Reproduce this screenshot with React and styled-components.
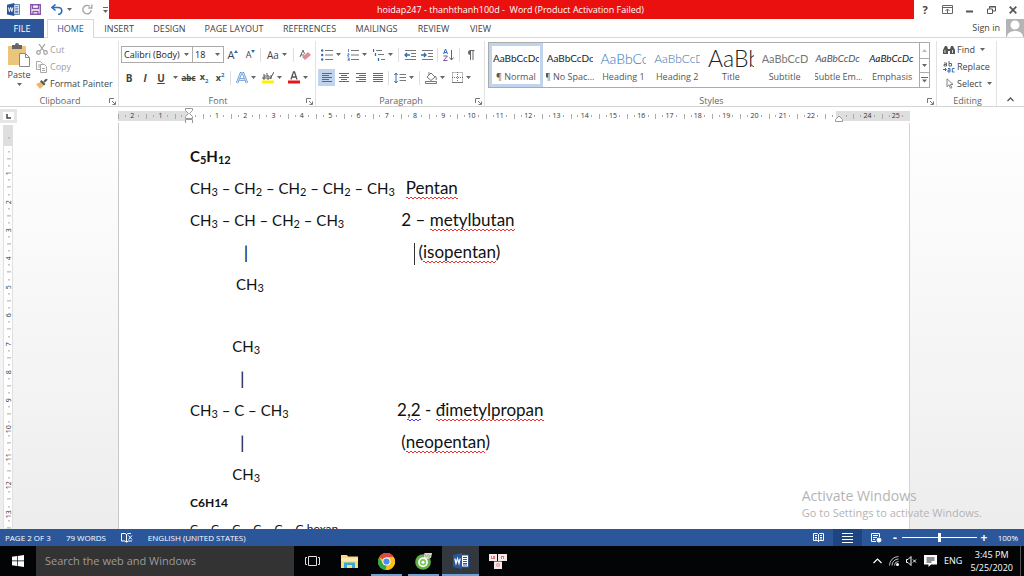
import React from "react";
import styled, { createGlobalStyle, css } from "styled-components";

const UI = '"Open Sans", "Noto Sans", sans-serif';
const DOC = 'Lato, "Open Sans", sans-serif';
const BLUE = "#2b579a";

const Global = createGlobalStyle`
  *, *::before, *::after { box-sizing: border-box; }
  body { margin: 0; font: 9px/12px ${UI}; color: #444; background: #fff; }
  button, input, select { font: inherit; color: inherit; margin: 0; padding: 0; border: 0; background: none; border-radius: 0; }
  svg { display: block; flex: none; }
  h1, h2, p { margin: 0; font-weight: 400; }
`;

const Shell = styled.div`
  height: 100vh;
  display: flex;
  flex-direction: column;
  overflow: hidden;
`;

/* Title bar */
const TitleBar = styled.header`
  display: flex;
  flex: none;
  height: 19px;
`;
const QuickAccess = styled.div`
  display: flex;
  align-items: center;
  width: 109px;
  padding-left: 7px;
  gap: 10px;
`;
const IconButton = styled.button`
  display: flex;
  align-items: center;
  justify-content: center;
  gap: 4px;
`;
const TitleText = styled.h1`
  flex: 1;
  background: #ea1010;
  color: #fff;
  font-size: 9px;
  line-height: 19px;
  text-align: center;
  white-space: pre;
  padding-right: 2px;
`;
const WindowControls = styled.div`
  display: grid;
  grid-template-columns: repeat(5, 22px);
  font-weight: 700;
  font-size: 11px;
`;

/* Tabs */
const TabRow = styled.nav`
  display: flex;
  flex: none;
  height: 19px;
  border-bottom: 1px solid #d8d8d8;
`;
const Tab = styled.button`
  width: ${(p) => p.$w}px;
  height: 19px;
  white-space: nowrap;
  text-align: center;
  ${(p) => p.$kind === "file" && css`
    background: ${BLUE};
    color: #fff;
    margin-right: 3px;
  `}
  ${(p) => p.$kind === "active" && css`
    background: #fff;
    color: ${BLUE};
    border: 1px solid #d8d8d8;
    border-bottom: 0;
  `}
`;
const Account = styled.button`
  display: flex;
  align-items: center;
  gap: 6px;
  margin-left: auto;
  height: 18px;
`;

/* Ribbon */
const Ribbon = styled.section`
  display: flex;
  flex: none;
  height: 69px;
  padding: 3px 0 0;
  border-bottom: 1px solid #d4d4d4;
`;
const Group = styled.div`
  display: flex;
  flex-direction: column;
  flex: ${(p) => (p.$w ? `0 0 ${p.$w}px` : "1 1 0")};
  min-width: 0;
  padding-left: 2px;
  border-right: 1px solid #e2e2e2;
`;
const GroupBody = styled.div`
  flex: 1;
  display: flex;
  min-height: 0;
`;
const GroupFooter = styled.div`
  display: grid;
  grid-template-columns: 12px 1fr 12px;
  align-items: center;
  height: 11px;
  text-align: center;
  color: #666;
`;
const GroupName = styled.span`
  grid-column: 2;
`;
const PasteButton = styled.button`
  display: flex;
  flex-direction: column;
  align-items: center;
  width: 34px;
  padding-top: 2px;
  gap: 2px;
`;
const Stack = styled.div`
  display: flex;
  flex-direction: column;
  padding-left: ${(p) => p.$pad || 0}px;
`;
const CommandButton = styled.button`
  display: flex;
  align-items: center;
  gap: 2px;
  height: 17px;
  white-space: nowrap;
  color: ${(p) => (p.$off ? "#a0a0a0" : "#444")};
  svg + svg { margin-left: 3px; }
`;
const CommandCaret = styled.span`
  padding-left: 3px;
`;
const ToolRows = styled.div`
  display: flex;
  flex-direction: column;
  padding-top: 5px;
  gap: 6px;
`;
const ToolRow = styled.div`
  display: flex;
  align-items: center;
  height: 17px;
`;
const Tool = styled.button`
  display: flex;
  align-items: center;
  justify-content: center;
  width: ${(p) => p.$w || 17}px;
  height: 17px;
  gap: ${(p) => (p.$tight ? 0 : 3)}px;
  background: ${(p) => (p.$on ? "#c2d3ee" : "none")};
  font-size: ${(p) => p.$size || 10}px;
  font-weight: ${(p) => (p.$bold ? 700 : 400)};
  font-style: ${(p) => (p.$italic ? "italic" : "normal")};
  text-decoration: ${(p) => p.$line || "none"};
  sub, sup { font-size: 6px; line-height: 1; color: #2f6eb5; }
`;
const Divider = styled.span`
  width: 1px;
  height: 14px;
  margin: 0 2px;
  background: #dedede;
`;
const SelectBox = styled.label`
  display: grid;
  align-items: center;
  width: ${(p) => p.$w}px;
  height: 17px;
  border: 1px solid #ababab;
  margin-right: -1px;
  background: #fff;
  select { grid-area: 1 / 1; appearance: none; padding-left: 2px; width: 100%; color: #222; }
  svg { grid-area: 1 / 1; justify-self: end; margin-right: 3px; pointer-events: none; }
`;

/* Style gallery */
const Gallery = styled.div`
  display: flex;
  height: 46px;
  margin: 1px 6px 0 1px;
  border: 1px solid #ababab;
  flex: 1;
  min-width: 0;
`;
const StyleList = styled.div`
  flex: 1;
  display: grid;
  grid-template-columns: repeat(8, minmax(0, 1fr));
`;
const StyleButton = styled.button`
  display: flex;
  flex-direction: column;
  align-items: center;
  min-width: 0;
  padding: 0 1px;
  overflow: hidden;
  border: 3px solid ${(p) => (p.$on ? "#c2d3ee" : "transparent")};
`;
const Sample = styled.span`
  width: 46px;
  height: 25px;
  line-height: 25px;
  overflow: hidden;
  white-space: nowrap;
  text-align: left;
  font-family: ${DOC};
  font-size: ${(p) => p.$size || 10}px;
  font-style: ${(p) => (p.$italic ? "italic" : "normal")};
  font-weight: ${(p) => p.$weight || 400};
  color: ${(p) => p.$color || "#222"};
`;
const StyleName = styled.span`
  white-space: nowrap;
  color: #555;
`;
const GalleryScroll = styled.div`
  width: 10px;
  display: grid;
  grid-template-rows: repeat(3, 1fr);
  border-left: 1px solid #ababab;
  button + button { border-top: 1px solid #ababab; }
`;
const CollapseButton = styled.button`
  width: 27px;
  display: flex;
  align-items: flex-end;
  justify-content: center;
  padding-bottom: 4px;
`;

/* Rulers */
const RulerRow = styled.div`
  display: flex;
  flex: none;
  height: 16px;
  padding-top: 2px;
`;
const CornerCell = styled.button`
  width: 17px;
  border: 3px solid #e6e6e6;
  margin-right: -3px;
  display: flex;
  align-items: center;
  justify-content: center;
`;
const RulerTrack = styled.div`
  flex: 1;
  display: flex;
  justify-content: center;
  padding: 2px 10px 2px 0;
`;
const Ruler = styled.div`
  width: 792px;
  display: grid;
  grid-template-columns: repeat(28, 28fr);
  background: linear-gradient(90deg, #dedede 72px, #fff 72px, #fff calc(100% - 74px), #dedede calc(100% - 74px));
`;
const ruled = css`
  font-size: 7px;
  line-height: 10px;
  color: #333;
`;
const HMark = styled.span`
  ${ruled}
  display: flex;
  align-items: center;
  justify-content: center;
  height: 10px;
  background:
    linear-gradient(#aaa, #aaa) 0 50% / 1px 5px no-repeat,
    linear-gradient(#aaa, #aaa) 25% 50% / 1px 2px no-repeat,
    linear-gradient(#aaa, #aaa) 75% 50% / 1px 2px no-repeat;
`;
const VRuler = styled.div`
  flex: none;
  width: 10px;
  height: 403px;
  margin: 2px 1px 0 3px;
  padding-top: 6px;
  display: grid;
  grid-auto-rows: 1fr;
  border-left: 1px solid #e0e0e0;
  border-right: 1px solid #e0e0e0;
  background: linear-gradient(#dedede 21px, #fff 21px);
`;
const VMark = styled.span`
  ${ruled}
  writing-mode: vertical-rl;
  transform: rotate(180deg);
  display: flex;
  align-items: center;
  justify-content: center;
  background:
    linear-gradient(#aaa, #aaa) 50% 0 / 4px 1px no-repeat,
    linear-gradient(#aaa, #aaa) 50% 25% / 2px 1px no-repeat,
    linear-gradient(#aaa, #aaa) 50% 75% / 2px 1px no-repeat;
`;

/* Document */
const Workspace = styled.main`
  position: relative;
  flex: 1;
  min-height: 0;
  display: flex;
  overflow: hidden;
  background: linear-gradient(#fff, #ededed);
`;
const Canvas = styled.div`
  flex: 1;
  display: flex;
  justify-content: center;
  padding-right: 10px;
`;
const Page = styled.article`
  width: 792px;
  flex: none;
  padding: 17px 71px 0;
  background: #fff;
  border-left: 1px solid #c8c8c8;
  border-right: 1px solid #d4d4d4;
  color: #111;
  font-family: ${DOC};
  font-size: 17px;
`;
const Compound = styled.section`
  padding-bottom: ${(p) => p.$after || 0}px;
`;
const Line = styled.p`
  display: grid;
  grid-template-columns: 207px 1fr;
  height: 32px;
  line-height: 32px;
  white-space: pre;
  font-weight: ${(p) => (p.$bold ? 700 : 400)};
`;
const FormulaText = styled.span`
  font-size: 15px;
`;
const SmallLine = styled.p`
  height: 26px;
  line-height: 26px;
  font-size: 12px;
  white-space: pre;
  font-weight: ${(p) => (p.$bold ? 700 : 400)};
`;
const Low = styled.sub`
  font-size: 11px;
  line-height: 1;
  vertical-align: -2px;
`;
const Bond = styled.span`
  font-size: 18px;
`;
const Spell = styled.span`
  padding-bottom: 1px;
  background:
    linear-gradient(90deg, ${(p) => p.$c || "#e33"} 2px, transparent 2px) 0 calc(100% - 1px) / 4px 1px repeat-x,
    linear-gradient(90deg, transparent 2px, ${(p) => p.$c || "#e33"} 2px) 0 100% / 4px 1px repeat-x;
`;
const Cursor = styled.span`
  display: inline-block;
  width: 1px;
  height: 22px;
  margin-right: 3px;
  vertical-align: middle;
  background: #333;
`;
const Watermark = styled.aside`
  position: absolute;
  right: 42px;
  bottom: 8px;
  color: #b4b4b4;
  font-size: 11px;
  line-height: 16px;
  strong { display: block; font-weight: 400; font-size: 14px; line-height: 18px; }
`;

/* Status bar */
const StatusBar = styled.footer`
  display: flex;
  align-items: center;
  flex: none;
  height: 17px;
  padding: 0 6px 0 5px;
  background: ${BLUE};
  color: #fff;
  font-size: 8px;
`;
const StatusItem = styled.button`
  height: 17px;
  display: flex;
  align-items: center;
  margin-right: ${(p) => (p.$last ? "auto" : "15px")};
`;
const ViewButton = styled.button`
  width: 29px;
  height: 17px;
  display: flex;
  align-items: center;
  justify-content: center;
  background: ${(p) => (p.$on ? "#1e4580" : "none")};
`;
const ZoomArea = styled.div`
  display: flex;
  align-items: center;
  gap: 3px;
`;
const ZoomStep = styled.button`
  font-size: 12px;
  line-height: 12px;
  font-weight: 700;
  width: 8px;
`;
const ZoomSlider = styled.input`
  appearance: none;
  width: 75px;
  height: 9px;
  background: linear-gradient(#fff, #fff) 0 50% / 100% 1px no-repeat;
  &::-webkit-slider-thumb { appearance: none; width: 3px; height: 9px; background: #fff; }
`;
const ZoomValue = styled.span`
  width: 27px;
  text-align: right;
`;

/* Taskbar */
const Taskbar = styled.footer`
  display: flex;
  flex: none;
  height: 30px;
  background: #020406;
  color: #fff;
`;
const StartButton = styled.button`
  width: 36px;
  display: flex;
  align-items: center;
  justify-content: center;
`;
const SearchBox = styled.input`
  width: 258px;
  padding-left: 9px;
  background: #333;
  font-size: 11px;
  &::placeholder { color: #9b9b9b; opacity: 1; }
`;
const TaskButton = styled.button`
  width: 37px;
  display: flex;
  align-items: center;
  justify-content: center;
  border-bottom: 2px solid ${(p) => (p.$open ? "#6ba3d6" : "transparent")};
  border-top: 2px solid transparent;
  ${(p) => p.$open && !p.$on && css`width: 31px; margin: 0 3px;`}
  ${(p) => p.$on && css`background: #33383e; border-top-color: #33383e;`}
`;
const Tray = styled.div`
  display: flex;
  align-items: center;
  gap: 7px;
  margin-left: auto;
  padding-right: 3px;
  font-size: 9px;
`;
const Clock = styled.time`
  text-align: center;
  line-height: 13px;
  margin-left: 1px;
`;
const ShowDesktop = styled.button`
  width: 1px;
  height: 30px;
  background: #555;
`;

const Caret = ({ c = "#666" }) => (
  <svg width="5" height="3" viewBox="0 0 5 3"><path d="M0 0h5L2.500 3z" fill={c} /></svg>
);
const Launcher = () => (
  <svg width="7" height="7" viewBox="0 0 7 7" fill="none" stroke="#777"><path d="M.5 5V.5H5M3 3l3 3M6.500 3.500v3h-3" /></svg>
);
const WordLogo = ({ size = 13 }) => (
  <svg width={size} height={size} viewBox="0 0 16 16">
    <path d="M8 2h7.500v12H8z" fill="#fff" stroke={BLUE} />
    <path d="M10 4.500h4M10 6.500h4M10 8.500h4M10 10.500h4M10 12h4" stroke={BLUE} />
    <path d="M0 2l9-2v16l-9-2z" fill={BLUE} />
    <path d="M1.800 5.500l1.200 5 1.500-5 1.500 5 1.200-5" fill="none" stroke="#fff" strokeWidth="1.200" />
  </svg>
);
const Lines = ({ rows, c = "#666" }) => (
  <svg width="12" height="10" viewBox="0 0 12 10" stroke={c}>
    {rows.map(([a, b], i) => <path key={i} d={`M${a} ${i * 2 + 0.5}H${b}`} />)}
  </svg>
);
const ListIcon = ({ kind }) => (
  <svg width="12" height="12" viewBox="0 0 12 12">
    {kind === "multi" ? (
      <>
        <path d="M3 1.500h6M5 5.500h6M8 10.500h4" stroke="#777" />
        <path d="M.5 0v3M2.500 4v3M5.500 9v3" stroke="#2f6eb5" strokeWidth="1.300" />
      </>
    ) : (
      <>
        <path d="M4 1.500h8M4 6h8M4 10.500h8" stroke="#777" />
        {kind === "bullet"
          ? [1.5, 6, 10.5].map((y) => <circle key={y} cx="1.200" cy={y} r="1.200" fill="#2f6eb5" />)
          : <path d="M1.500 0v3M.5 4.800h1.500v1.200H.8v1.300h1.400M.5 9h1.700v3H.5M.8 10.500h1.200" fill="none" stroke="#2f6eb5" strokeWidth=".8" />}
      </>
    )}
  </svg>
);
const IndentIcon = ({ flip }) => (
  <svg width="12" height="10" viewBox="0 0 12 10" fill="none">
    <path d="M1 .5h11M7 3.500h5M7 6.500h5M1 9.500h11" stroke="#777" />
    <path d={flip ? "M0 5h5M3 3l2 2-2 2" : "M6 5H1M3 3L1 5l2 2"} stroke="#2f6eb5" strokeWidth="1.300" />
  </svg>
);
const Doc = ({ x = 0, y = 0 }) => <path d={`M${x + 0.5} ${y + 0.5}h4l2 2v6h-6z`} fill="#fff" stroke="#a8a8a8" />;

const tabs = [
  ["FILE", 44, "file"], ["HOME", 47, "active"], ["INSERT", 50], ["DESIGN", 51], ["PAGE LAYOUT", 78],
  ["REFERENCES", 73], ["MAILINGS", 61], ["REVIEW", 53], ["VIEW", 41],
];
const styleItems = [
  ["AaBbCcDc", "¶ Normal", {}, true],
  ["AaBbCcDc", "¶ No Spac...", {}],
  ["AaBbCc", "Heading 1", { $size: 14, $color: "#2e74b5", $weight: 300 }],
  ["AaBbCcD", "Heading 2", { $size: 12, $color: "#2e74b5", $weight: 300 }],
  ["AaBb", "Title", { $size: 23, $weight: 300 }],
  ["AaBbCcD", "Subtitle", { $size: 11, $color: "#777" }],
  ["AaBbCcDc", "Subtle Em...", { $italic: true, $color: "#555" }],
  ["AaBbCcDc", "Emphasis", { $italic: true }],
];
const hMarks = ["2", "1", "start", ...Array.from({ length: 22 }, (_, i) => String(i + 1)), "end", "24", "25"];
const vMarks = Array.from({ length: 14 }, (_, i) => (i ? String(i) : ""));

const Formula = ({ children }) => (
  <FormulaText>
    {children.split(/(\d)/).map((s, i) => (i % 2 ? <Low key={i}>{s}</Low> : s))}
  </FormulaText>
);

const Footer = ({ name, launch }) => (
  <GroupFooter>
    <GroupName>{name}</GroupName>
    {launch && <IconButton aria-label={`${name} settings`}><Launcher /></IconButton>}
  </GroupFooter>
);

function TopBar() {
  return (
    <TitleBar>
      <QuickAccess>
        <WordLogo />
        <IconButton aria-label="Save">
          <svg width="11" height="11" viewBox="0 0 11 11"><path d="M.7.7h9.600v9.600H.7z" fill="#fff" stroke="#8858a8" strokeWidth="1.400" /><path d="M2.500 1v3.500h6V1M3 10V7.500h5V10" stroke="#8858a8" fill="none" strokeWidth="1.300" /></svg>
        </IconButton>
        <IconButton aria-label="Undo">
          <svg width="12" height="11" viewBox="0 0 12 11" fill="none" stroke="#2f6eb5" strokeWidth="1.600"><path d="M4.500.5L1 3.500l3.500 3M1 3.500h6c5 0 5 6 0 7" /></svg>
          <Caret />
        </IconButton>
        <IconButton aria-label="Redo">
          <svg width="11" height="11" viewBox="0 0 11 11" fill="none" stroke="#a6a6a6" strokeWidth="1.400"><path d="M7.800 2.400A4.200 4.200 0 1 0 9.300 6M6.300 4h3.500V.5" /></svg>
        </IconButton>
        <IconButton aria-label="Customize">
          <svg width="5" height="6" viewBox="0 0 5 6"><path d="M0 .5h5" stroke="#666" /><path d="M0 3h5L2.500 6z" fill="#666" /></svg>
        </IconButton>
      </QuickAccess>
      <TitleText>hoidap247 - thanhthanh100d -  Word (Product Activation Failed)</TitleText>
      <WindowControls>
        <IconButton>?</IconButton>
        <IconButton aria-label="Ribbon options"><svg width="11" height="9" viewBox="0 0 11 9" fill="none" stroke="#666"><path d="M.5.5h10v8H.5zM.5 2.500h10M5.500 8V4M3.500 6l2-2 2 2" /></svg></IconButton>
        <IconButton aria-label="Minimize"><svg width="7" height="6" viewBox="0 0 7 6"><path d="M0 4.500h7" stroke="#555" strokeWidth="2" /></svg></IconButton>
        <IconButton aria-label="Restore"><svg width="9" height="8" viewBox="0 0 9 8" fill="none" stroke="#555"><path d="M.5 3h5v4.500h-5zM2.500 2.500v-2h6V5H6M2.500 1h6" /></svg></IconButton>
        <IconButton aria-label="Close"><svg width="8" height="8" viewBox="0 0 8 8" stroke="#555" strokeWidth="1.700"><path d="M.7.7l6.600 6.600M7.300.7L.7 7.300" /></svg></IconButton>
      </WindowControls>
    </TitleBar>
  );
}

function Tabs() {
  return (
    <TabRow>
      {tabs.map(([name, w, kind]) => <Tab key={name} $w={w} $kind={kind}>{name}</Tab>)}
      <Account>
        Sign in
        <svg width="18" height="18" viewBox="0 0 18 18"><path d="M0 0h18v18H0z" fill="#b4b4b4" /><circle cx="9" cy="6" r="4.500" fill="#fff" /><path d="M1 18c0-8 16-8 16 0z" fill="#fff" /></svg>
      </Account>
    </TabRow>
  );
}

function RibbonBar() {
  return (
    <Ribbon>
      <Group $w={119}>
        <GroupBody>
          <PasteButton>
            <svg width="22" height="24" viewBox="0 0 22 24">
              <path d="M0 3h18v19H0z" fill="#ecc57c" /><path d="M4 2h3a2 2 0 0 1 4 0h3v4H4z" fill="#666" />
              <path d="M11.500 10.500h6l4 4v9h-10z" fill="#fff" stroke="#888" /><path d="M17.500 10.500v4h4" fill="none" stroke="#888" />
            </svg>
            Paste
            <Caret />
          </PasteButton>
          <Stack>
            <CommandButton $off>
              <svg width="12" height="11" viewBox="0 0 12 11" fill="none" stroke="#a0a0a0" strokeWidth="1.200"><path d="M3 0l5 7M9 0L4 7" /><circle cx="2.500" cy="8.500" r="1.800" /><circle cx="9.500" cy="8.500" r="1.800" /></svg>
              Cut
            </CommandButton>
            <CommandButton $off>
              <svg width="12" height="12" viewBox="0 0 12 12"><Doc /><Doc x={4} y={3} /><path d="M2 4h2M2 6h2M6 7.500h3M6 9.500h3" stroke="#a8a8a8" /></svg>
              Copy
            </CommandButton>
            <CommandButton>
              <svg width="12" height="10" viewBox="0 0 12 10"><path d="M0 5l5-2 3 3-4 4z" fill="#ecb768" /><path d="M4 2.500l1.500-1.500 4 4L8 6.500z" fill="#555" /><path d="M8 3l3-3" stroke="#555" strokeWidth="2" /></svg>
              Format Painter
            </CommandButton>
          </Stack>
        </GroupBody>
        <Footer name="Clipboard" launch />
      </Group>

      <Group $w={197}>
        <GroupBody>
          <ToolRows>
            <ToolRow>
              <SelectBox $w={72}><select aria-label="Font"><option>Calibri (Body)</option></select><Caret /></SelectBox>
              <SelectBox $w={32}><select aria-label="Font size"><option>18</option></select><Caret /></SelectBox>
              <Tool $w={20} $size={11} $tight aria-label="Grow font">A<svg width="4" height="9" viewBox="0 0 4 9"><path d="M0 3h4L2 0z" fill="#2f6eb5" /></svg></Tool>
              <Tool $w={15} $size={9} $tight aria-label="Shrink font">A<svg width="4" height="9" viewBox="0 0 4 9"><path d="M0 0h4L2 3z" fill="#2f6eb5" /></svg></Tool>
              <Divider />
              <Tool $w={28}>Aa <Caret /></Tool>
              <Divider />
              <Tool aria-label="Clear formatting"><svg width="12" height="12" viewBox="0 0 12 12"><path d="M1 8L4 1l1.500 4M2 6h3" fill="none" stroke="#666" /><path d="M3 8l6-5 3 3-6 5z" fill="#e08a9a" /></svg></Tool>
            </ToolRow>
            <ToolRow>
              <Tool $w={16} $bold>B</Tool>
              <Tool $w={16} $italic $bold>I</Tool>
              <Tool $w={16} $line="underline" $bold>U</Tool>
              <Tool $w={12} aria-label="Underline styles"><Caret /></Tool>
              <Tool $w={15} $size={8} $line="line-through" $bold>abc</Tool>
              <Tool $w={16} $size={9} $bold><span>x<sub>2</sub></span></Tool>
              <Tool $w={16} $size={9} $bold><span>x<sup>2</sup></span></Tool>
              <Divider />
              <Tool $w={26} aria-label="Text effects"><svg width="12" height="12" viewBox="0 0 12 12"><path d="M1 11L5 1h2l4 10M3.500 7.500h5" fill="none" stroke="#5b94d2" strokeWidth="2.400" /><path d="M1 11L5 1h2l4 10M3.500 7.500h5" fill="none" stroke="#fff" strokeWidth=".8" /></svg><Caret /></Tool>
              <Tool $w={26} aria-label="Highlight"><svg width="12" height="13" viewBox="0 0 12 13"><path d="M0 9.500h12V12.500H0z" fill="#fff200" /><path d="M1 4h2v4H1V6h2M5 2v6h2V5H5M12 1L8 8M9 4v4" stroke="#555" fill="none" /></svg><Caret /></Tool>
              <Tool $w={26} aria-label="Font color"><svg width="12" height="13" viewBox="0 0 12 13"><path d="M0 9.500h12V12.500H0z" fill="#e81515" /><path d="M3 8.500L5.500 1h1L9 8.500M4 6h4" stroke="#555" strokeWidth="1.300" fill="none" /></svg><Caret /></Tool>
            </ToolRow>
          </ToolRows>
        </GroupBody>
        <Footer name="Font" launch />
      </Group>

      <Group $w={169}>
        <GroupBody>
          <ToolRows>
            <ToolRow>
              <Tool $w={26} aria-label="Bullets"><ListIcon kind="bullet" /><Caret /></Tool>
              <Tool $w={26} aria-label="Numbering"><ListIcon kind="number" /><Caret /></Tool>
              <Tool $w={26} aria-label="Multilevel list"><ListIcon kind="multi" /><Caret /></Tool>
              <Divider />
              <Tool aria-label="Decrease indent"><IndentIcon /></Tool>
              <Tool aria-label="Increase indent"><IndentIcon flip /></Tool>
              <Divider />
              <Tool aria-label="Sort"><svg width="12" height="12" viewBox="0 0 12 12" fill="none"><path d="M.5 5L2.500 0l2 5M1 3.500h3" stroke="#2f6eb5" /><path d="M.5 7h4l-4 4.500h4" stroke="#8858a8" /><path d="M8.500 1v10M6.500 8.500l2 2.500 2-2.500" stroke="#666" /></svg></Tool>
              <Divider />
              <Tool aria-label="Show marks"><svg width="9" height="10" viewBox="0 0 9 10"><path d="M4 .5h4.500M4.500.5V10M7 .5V10" stroke="#666" /><path d="M4.500 0a2.500 2.500 0 0 0 0 5z" fill="#666" /></svg></Tool>
            </ToolRow>
            <ToolRow>
              <Tool $on aria-label="Align left"><Lines rows={[[1, 11], [1, 8], [1, 11], [1, 8], [1, 11]]} /></Tool>
              <Tool aria-label="Center"><Lines rows={[[1, 11], [3, 9], [1, 11], [3, 9], [1, 11]]} /></Tool>
              <Tool aria-label="Align right"><Lines rows={[[1, 11], [4, 11], [1, 11], [4, 11], [1, 11]]} /></Tool>
              <Tool aria-label="Justify"><Lines rows={[[1, 11], [1, 11], [1, 11], [1, 11], [1, 11]]} /></Tool>
              <Divider />
              <Tool $w={26} aria-label="Line spacing"><svg width="12" height="12" viewBox="0 0 12 12" fill="none"><path d="M5.500 2.500H12M5.500 5.500H12M5.500 8.500H12" stroke="#777" /><path d="M2 1v10M.3 3L2 1l1.700 2M.3 9L2 11l1.700-2" stroke="#2f6eb5" /></svg><Caret /></Tool>
              <Divider />
              <Tool $w={26} aria-label="Shading"><svg width="12" height="12" viewBox="0 0 12 12" fill="none" stroke="#777"><path d="M2 5l4-4 4 4-4 3.500zM4 3V0M10 4c1.500 1 1.500 3 1 4" /><path d="M.5 9.500h11v2H.5z" fill="#fff" /></svg><Caret /></Tool>
              <Tool $w={26} aria-label="Borders"><svg width="11" height="11" viewBox="0 0 11 11" fill="none" stroke="#777" strokeDasharray="1 1"><path d="M.5.5h10v10M.5.5v10M5.500 0v11M0 5.500h11" /><path d="M0 10.500h11" strokeDasharray="none" /></svg><Caret /></Tool>
            </ToolRow>
          </ToolRows>
        </GroupBody>
        <Footer name="Paragraph" launch />
      </Group>

      <Group>
        <GroupBody>
          <Gallery>
            <StyleList>
              {styleItems.map(([text, name, look, on]) => (
                <StyleButton key={name} $on={on}>
                  <Sample {...look}>{text}</Sample>
                  <StyleName>{name}</StyleName>
                </StyleButton>
              ))}
            </StyleList>
            <GalleryScroll>
              <IconButton aria-label="Previous styles"><svg width="5" height="3" viewBox="0 0 5 3"><path d="M0 3h5L2.500 0z" fill="#bbb" /></svg></IconButton>
              <IconButton aria-label="Next styles"><Caret /></IconButton>
              <IconButton aria-label="More styles"><svg width="7" height="6" viewBox="0 0 7 6"><path d="M0 .5h7" stroke="#666" /><path d="M1 2.500h5L3.500 5.500z" fill="#666" /></svg></IconButton>
            </GalleryScroll>
          </Gallery>
        </GroupBody>
        <Footer name="Styles" launch />
      </Group>

      <Group $w={60}>
        <GroupBody>
          <Stack $pad={4}>
            <CommandButton>
              <svg width="12" height="10" viewBox="0 0 12 10"><path d="M0 9V5l2-4h2l1 3h2l1-3h2l2 4v4H7V6H5v3z" fill="#555" /><path d="M2 5v3M9.500 5v3" stroke="#fff" strokeWidth=".8" /></svg>
              Find <CommandCaret><Caret /></CommandCaret>
            </CommandButton>
            <CommandButton>
              <svg width="12" height="12" viewBox="0 0 12 12" fill="none"><path d="M1 2h2.500v3H1V3.500h2.500M6 0v5h2.500V2.500H6" stroke="#666" /><path d="M0 8.500h3M2 7l1.500 1.500L2 10M5 7.500h2v3.500H5V9h2M11.500 7.500H9.300V11h2.200" stroke="#2f6eb5" /></svg>
              Replace
            </CommandButton>
            <CommandButton>
              <svg width="12" height="11" viewBox="0 0 12 11"><path d="M4 .8v8l2-2 1.500 3.500 1.300-.6L7.400 6.400H10z" fill="#fff" stroke="#777" strokeWidth=".9" /></svg>
              Select <Caret />
            </CommandButton>
          </Stack>
        </GroupBody>
        <Footer name="Editing" />
      </Group>
      <CollapseButton aria-label="Collapse ribbon"><svg width="7" height="5" viewBox="0 0 7 5"><path d="M.5 4l3-3 3 3" fill="none" stroke="#555" strokeWidth="1.300" /></svg></CollapseButton>
    </Ribbon>
  );
}

function HorizontalRuler() {
  return (
    <RulerRow>
      <CornerCell aria-label="Tab stop"><svg width="5" height="5" viewBox="0 0 5 5"><path d="M1 0v4h4" fill="none" stroke="#444" strokeWidth="1.500" /></svg></CornerCell>
      <RulerTrack>
        <Ruler>
          {hMarks.map((m, i) => (
            <HMark key={i}>
              {m === "start" && <svg width="8" height="16" viewBox="0 0 8 16" fill="#fff" stroke="#999"><path d="M.5.5h7v2l-3 3 3 3v2h-7v-2l3-3-3-3zM.5 11.500h7v4h-7z" /></svg>}
              {m === "end" && <svg width="8" height="14" viewBox="0 0 8 14" fill="#fff" stroke="#999"><path d="M4 7l3.500 3.500v2h-7v-2z" /></svg>}
              {m !== "start" && m !== "end" && m}
            </HMark>
          ))}
        </Ruler>
      </RulerTrack>
    </RulerRow>
  );
}

function DocumentPage() {
  return (
    <Page>
      <Compound $after={30}>
        <Line $bold><Formula>C5H12</Formula></Line>
        <Line><Formula>CH3 – CH2 – CH2 – CH2 – CH3</Formula><span>{"  "}<Spell>Pentan</Spell></span></Line>
        <Line><Formula>CH3 – CH – CH2 – CH3</Formula><span>{" 2 – "}<Spell>metylbutan</Spell></span></Line>
        <Line><FormulaText>{"              "}<Bond>|</Bond></FormulaText><span>{"    "}<Cursor />(<Spell>isopentan</Spell>)</span></Line>
        <Line><Formula>{"            CH3"}</Formula></Line>
      </Compound>
      <Compound>
        <Line><Formula>{"           CH3"}</Formula></Line>
        <Line><FormulaText>{"             "}<Bond>|</Bond></FormulaText></Line>
        <Line><Formula>CH3 – C – CH3</Formula><span>2<Spell $c="#44e">,2</Spell> - <Spell>đimetylpropan</Spell></span></Line>
        <Line><FormulaText>{"             "}<Bond>|</Bond></FormulaText><span> (<Spell>neopentan</Spell>)</span></Line>
        <Line><Formula>{"           CH3"}</Formula></Line>
      </Compound>
      <SmallLine $bold>C6H14</SmallLine>
      <SmallLine>C – C – C – C – C – C hexan</SmallLine>
    </Page>
  );
}

function Status() {
  return (
    <StatusBar>
      <StatusItem>PAGE 2 OF 3</StatusItem>
      <StatusItem>79 WORDS</StatusItem>
      <StatusItem aria-label="Proofing"><svg width="12" height="10" viewBox="0 0 12 10" fill="none" stroke="#fff"><path d="M5.500 1.500v8M5.500 9L4 8H.5V.5H4l1.500 1L7 .5h3M6 9l1-1h4M7.500 2.500l3.500 4M11 2.500l-3.500 4" /></svg></StatusItem>
      <StatusItem $last>ENGLISH (UNITED STATES)</StatusItem>
      <ViewButton aria-label="Read mode"><svg width="11" height="9" viewBox="0 0 11 9" fill="none" stroke="#fff"><path d="M.5.5h4l1 1 1-1h4v7h-4l-1 1-1-1h-4zM5.500 1v8M2 2.500h2M2 4.500h2M2 6h2M7 2.500h2M7 4.500h2M7 6h2" /></svg></ViewButton>
      <ViewButton $on aria-label="Print layout"><svg width="11" height="10" viewBox="0 0 11 10" stroke="#fff"><path d="M0 .5h11M0 3.500h11M0 6.500h11M0 9.500h11" /></svg></ViewButton>
      <ViewButton aria-label="Web layout"><svg width="11" height="10" viewBox="0 0 11 10" fill="none" stroke="#fff"><path d="M5 8.500H.5v-8h8V4M2 2.500h5M2 4.500h4M2 6.500h2" /><circle cx="8" cy="7" r="2" fill="#fff" /></svg></ViewButton>
      <ZoomArea>
        <ZoomStep aria-label="Zoom out">-</ZoomStep>
        <ZoomSlider type="range" aria-label="Zoom" min="0" max="200" defaultValue="100" />
        <ZoomStep aria-label="Zoom in">+</ZoomStep>
        <ZoomValue>100%</ZoomValue>
      </ZoomArea>
    </StatusBar>
  );
}

function SystemBar() {
  return (
    <Taskbar>
      <StartButton aria-label="Start"><svg width="12" height="12" viewBox="0 0 12 12" fill="#fff"><path d="M0 1.700L5 1v4.600H0zM5.700.9L12 0v5.600H5.700zM0 6.300h5v4.600l-5-.7zM5.700 6.300H12V12l-6.300-.9z" /></svg></StartButton>
      <SearchBox aria-label="Search" placeholder="Search the web and Windows" />
      <TaskButton aria-label="Task view"><svg width="15" height="10" viewBox="0 0 15 10" fill="none" stroke="#ddd"><path d="M3.500.5h8v9h-8zM2 1.500H.5v7H2M13 1.500h1.500v7H13" /></svg></TaskButton>
      <TaskButton aria-label="File Explorer"><svg width="17" height="15" viewBox="0 0 17 15"><path d="M0 1h6l1 1.500h10V14H0z" fill="#f6dc83" /><path d="M0 4h17v3H0z" fill="#fbeaa8" /><path d="M3 14V8.500h11V14h-3v-3H6v3z" fill="#38a9dc" /></svg></TaskButton>
      <TaskButton $open aria-label="Chrome">
        <svg width="17" height="17" viewBox="0 0 18 18"><circle cx="9" cy="9" r="9" fill="#fbc116" /><path d="M9 9L1.200 4.500A9 9 0 0 1 16.800 4.500H9z" fill="#dd4b3e" /><path d="M1.200 4.500A9 9 0 0 0 8 18l4.500-7H5.100z" fill="#2da94f" /><path d="M16.800 4.500H9v9L8 18A9 9 0 0 0 16.800 4.500z" fill="#fbc116" /><circle cx="9" cy="9" r="4.300" fill="#fff" /><circle cx="9" cy="9" r="3.300" fill="#4a8af4" /></svg>
      </TaskButton>
      <TaskButton $open aria-label="Coc Coc">
        <svg width="17" height="17" viewBox="0 0 18 18"><circle cx="8.500" cy="9.500" r="8.300" fill="#62b246" /><path d="M9 8L10 0h8l-1 5z" fill="#cfe6c4" /><path d="M11 1.500l1 3M14 1l-.5 3M16.500 2l-2 3" stroke="#c66" strokeWidth=".8" /><circle cx="8.500" cy="9.800" r="4.300" fill="#7cc35c" stroke="#fff" strokeWidth="1.800" /><circle cx="8.500" cy="9.800" r="1.600" fill="#fff" /></svg>
      </TaskButton>
      <TaskButton $open $on aria-label="Word"><WordLogo size={16} /></TaskButton>
      <TaskButton aria-label="UniKey">
        <svg width="18" height="15" viewBox="0 0 18 15"><path d="M0 0h8v7H0zM9 0h9v7H9zM5 7.500h8V15H5z" fill="#f2e8e8" /><path d="M2 2h4v3H2zM12 2h3v3h-3zM7.500 9.500h3v3h-3z" fill="#d77b83" /><path d="M3.500 2v2M13.500 3v2M9 10v2" stroke="#fff" /></svg>
      </TaskButton>
      <Tray>
        <IconButton aria-label="Hidden icons"><svg width="9" height="6" viewBox="0 0 9 6"><path d="M.5 5l4-4 4 4" fill="none" stroke="#fff" strokeWidth="1.200" /></svg></IconButton>
        <IconButton aria-label="Network"><svg width="10" height="10" viewBox="0 0 10 10" fill="none" stroke="#bbb"><path d="M.5 9.500A9 9 0 0 1 9.500.5M3 9.500A6.500 6.500 0 0 1 9.500 3M5.500 9.500a4 4 0 0 1 4-4" /><circle cx="8.500" cy="8.500" r="1.500" fill="#fff" stroke="none" /></svg></IconButton>
        <IconButton aria-label="Volume"><svg width="11" height="10" viewBox="0 0 11 10" fill="none" stroke="#fff"><path d="M.5 3.500H2l3-3v9l-3-3H.5zM7 3.500l3 3M10 3.500l-3 3" /></svg></IconButton>
        <IconButton aria-label="Notifications"><svg width="13" height="12" viewBox="0 0 13 12"><path d="M0 0h13v9.500H7L4.500 12V9.500H0z" fill="#fff" /><path d="M2.500 3h8M2.500 5h8M2.500 7h5" stroke="#222" /></svg></IconButton>
        <span>ENG</span>
        <Clock>3:45 PM<br />5/25/2020</Clock>
        <ShowDesktop aria-label="Show desktop" />
      </Tray>
    </Taskbar>
  );
}

export default function App() {
  return (
    <Shell>
      <Global />
      <TopBar />
      <Tabs />
      <RibbonBar />
      <HorizontalRuler />
      <Workspace>
        <VRuler>{vMarks.map((m, i) => <VMark key={i}>{m}</VMark>)}</VRuler>
        <Canvas><DocumentPage /></Canvas>
        <Watermark><strong>Activate Windows</strong>Go to Settings to activate Windows.</Watermark>
      </Workspace>
      <Status />
      <SystemBar />
    </Shell>
  );
}
